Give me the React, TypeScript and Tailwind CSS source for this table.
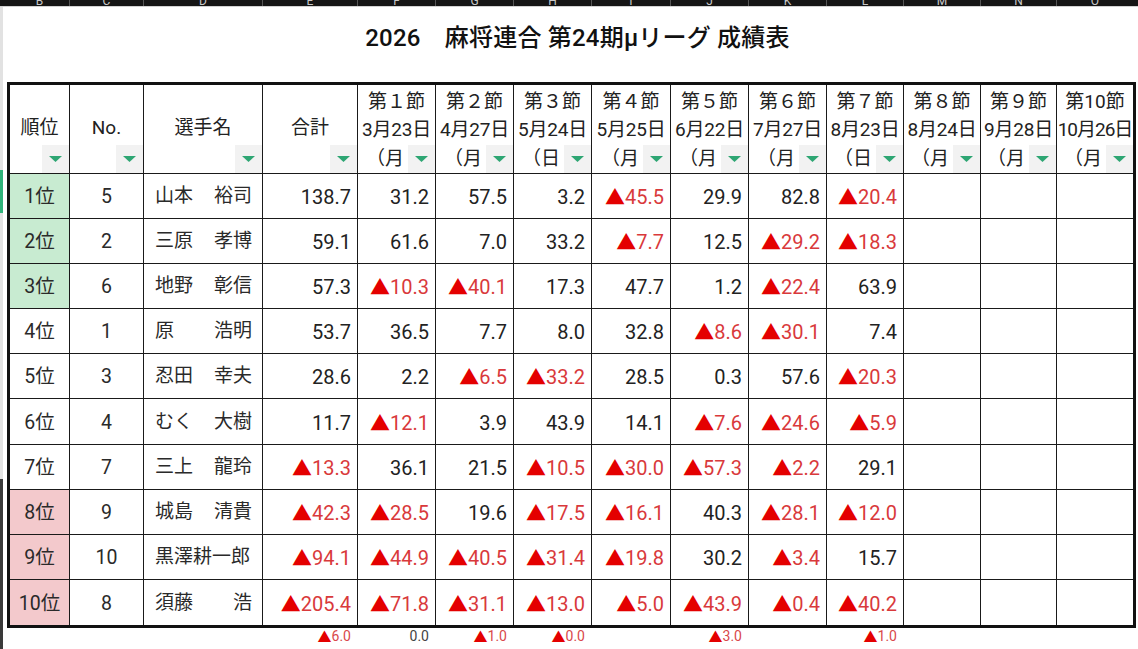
import React from "react";

const COLS =
  "grid grid-cols-[60px_74px_119px_95px_78px_78px_78px_79px_78px_78px_77px_77px_76px_76px]";

const LETTERS = ["B", "C", "D", "E", "F", "G", "H", "I", "J", "K", "L", "M", "N", "O"];

const MATCHES: [string, string, string][] = [
  ["第１節", "3月23日", "（月"],
  ["第２節", "4月27日", "（月"],
  ["第３節", "5月24日", "（日"],
  ["第４節", "5月25日", "（月"],
  ["第５節", "6月22日", "（月"],
  ["第６節", "7月27日", "（月"],
  ["第７節", "8月23日", "（日"],
  ["第８節", "8月24日", "（月"],
  ["第９節", "9月28日", "（月"],
  ["第10節", "10月26日", "（月"],
];

type Row = { rank: number; no: number; name: string[]; vals: string[] };

const ROWS: Row[] = [
  { rank: 1, no: 5, name: ["山本", "裕司"], vals: ["138.7", "31.2", "57.5", "3.2", "▲45.5", "29.9", "82.8", "▲20.4"] },
  { rank: 2, no: 2, name: ["三原", "孝博"], vals: ["59.1", "61.6", "7.0", "33.2", "▲7.7", "12.5", "▲29.2", "▲18.3"] },
  { rank: 3, no: 6, name: ["地野", "彰信"], vals: ["57.3", "▲10.3", "▲40.1", "17.3", "47.7", "1.2", "▲22.4", "63.9"] },
  { rank: 4, no: 1, name: ["原", "浩明"], vals: ["53.7", "36.5", "7.7", "8.0", "32.8", "▲8.6", "▲30.1", "7.4"] },
  { rank: 5, no: 3, name: ["忍田", "幸夫"], vals: ["28.6", "2.2", "▲6.5", "▲33.2", "28.5", "0.3", "57.6", "▲20.3"] },
  { rank: 6, no: 4, name: ["むく", "大樹"], vals: ["11.7", "▲12.1", "3.9", "43.9", "14.1", "▲7.6", "▲24.6", "▲5.9"] },
  { rank: 7, no: 7, name: ["三上", "龍玲"], vals: ["▲13.3", "36.1", "21.5", "▲10.5", "▲30.0", "▲57.3", "▲2.2", "29.1"] },
  { rank: 8, no: 9, name: ["城島", "清貴"], vals: ["▲42.3", "▲28.5", "19.6", "▲17.5", "▲16.1", "40.3", "▲28.1", "▲12.0"] },
  { rank: 9, no: 10, name: ["黒澤耕一郎"], vals: ["▲94.1", "▲44.9", "▲40.5", "▲31.4", "▲19.8", "30.2", "▲3.4", "15.7"] },
  { rank: 10, no: 8, name: ["須藤", "浩"], vals: ["▲205.4", "▲71.8", "▲31.1", "▲13.0", "▲5.0", "▲43.9", "▲0.4", "▲40.2"] },
];

const FOOT: (string | null)[] = [null, null, null, "▲6.0", "0.0", "▲1.0", "▲0.0", null, "▲3.0", null, "▲1.0", null, null, null];

function FilterBtn() {
  return (
    <span className="w-[27px] h-[28px] bg-[#f2f2f2] flex items-center justify-center shrink-0">
      <svg width="13" height="6" viewBox="0 0 13 6">
        <path d="M0 0H13L6.5 6Z" fill="#2ea673" />
      </svg>
    </span>
  );
}

function Num({ v }: { v: string }) {
  if (v.startsWith("▲")) {
    return (
      <span className="flex items-center">
        <span className="text-[#e40000] font-['Noto_Sans_CJK_JP',sans-serif] text-[20px] leading-none">▲</span>
        <span className="text-[#d9393b]">{v.slice(1)}</span>
      </span>
    );
  }
  return <span className="text-[#222]">{v}</span>;
}

function FootNum({ v }: { v: string }) {
  if (v.startsWith("▲")) {
    return (
      <span className="flex items-center">
        <span className="text-[#e40000] font-['Noto_Sans_CJK_JP',sans-serif] text-[14px] leading-none">▲</span>
        <span className="text-[#d9484a]">{v.slice(1)}</span>
      </span>
    );
  }
  return <span className="text-[#444]">{v}</span>;
}

export default function App() {
  const last = 13;
  return (
    <div className="w-[1138px] h-[649px] bg-white overflow-hidden flex flex-col font-[Roboto,'Noto_Sans_CJK_JP',sans-serif] text-[#222]">
      {/* top column-letter bar */}
      <div className="h-[6px] bg-[#151515] overflow-hidden flex shrink-0">
        <div className="w-[10px] shrink-0" />
        <div className={COLS}>
          {LETTERS.map((l, i) => (
            <div
              key={l}
              className={`h-[6px] overflow-hidden text-center text-[12px] leading-[12px] text-[#c8c8c8] ${i === last ? "" : "border-r border-[#555]"}`}
            >
              <div className="-mt-[5px]">{l}</div>
            </div>
          ))}
        </div>
      </div>
      <div className="h-px bg-[#d2d2d2] shrink-0" />

      <div className="flex flex-1 min-h-0">
        {/* left edge strip */}
        <div className="w-[3px] shrink-0 flex flex-col bg-[#e2e2e2]">
          <div className="h-[163px]" />
          <div className="h-[43px] bg-[#2fb37a]" />
          <div className="flex-1" />
          <div className="h-[170px] bg-[#3a3a3a]" />
        </div>

        <div className="flex-1 flex flex-col pl-[4px]">
          {/* title */}
          <div className="pt-[16px] mb-[29px] h-[30px] box-content flex justify-center pl-[10px]">
            <h1 className="text-[24px] leading-[30px] font-medium text-[#111] tracking-[0.2px]">
              2026　麻将連合 第24期μリーグ 成績表
            </h1>
          </div>

          {/* table */}
          <div className="w-[1129px] border-[3px] border-[#111]">
            <div className={COLS}>
              {/* header */}
              {["順位", "No.", "選手名", "合計"].map((h) => (
                <div
                  key={h}
                  className="relative h-[89px] border-r border-b border-[#1a1a1a] flex items-center justify-center text-[19px]"
                >
                  <span className="-mt-[2px]">{h}</span>
                  <div className="absolute right-0 bottom-0">
                    <FilterBtn />
                  </div>
                </div>
              ))}
              {MATCHES.map(([a, b, c], i) => (
                <div
                  key={a}
                  className={`h-[89px] border-b border-[#1a1a1a] flex flex-col ${i === 9 ? "" : "border-r"}`}
                >
                  <div className="h-[31px] leading-[31px] text-center text-[19px] pt-[1px]">{a}</div>
                  <div
                    className={`h-[27px] leading-[27px] text-center text-[19px] whitespace-nowrap ${i === 9 ? "tracking-[-1px]" : "tracking-[-0.2px]"}`}
                  >
                    {b}
                  </div>
                  <div className="flex-1 flex justify-end items-end">
                    <span className="leading-[28px] text-[19px] mr-[4px]">{c}</span>
                    <FilterBtn />
                  </div>
                </div>
              ))}

              {/* body */}
              {ROWS.map((r, ri) => {
                const lastRow = ri === ROWS.length - 1;
                const rowH = ri === 5 ? "h-[46px]" : "h-[45px]";
                const bb = lastRow ? "" : "border-b";
                const rankBg = r.rank <= 3 ? "bg-[#c8ebd1]" : r.rank >= 8 ? "bg-[#f3c9cc]" : "bg-white";
                return (
                  <React.Fragment key={r.rank}>
                    <div className={`${rowH} ${bb} ${rankBg} border-r border-[#1a1a1a] flex items-center justify-center pt-[2px] text-[19.5px] text-[#2a2a2a]`}>
                      {r.rank}位
                    </div>
                    <div className={`${rowH} ${bb} border-r border-[#1a1a1a] flex items-center justify-center pt-[2px] text-[19.5px] text-[#2a2a2a]`}>
                      {r.no}
                    </div>
                    <div className={`${rowH} ${bb} border-r border-[#1a1a1a] flex items-center justify-between pt-[1px] pl-[11px] pr-[10px] text-[19px] text-[#2a2a2a]`}>
                      {r.name.map((p) => (
                        <span key={p}>{p}</span>
                      ))}
                    </div>
                    {Array.from({ length: 11 }).map((_, ci) => {
                      const v = r.vals[ci];
                      return (
                        <div
                          key={ci}
                          className={`${rowH} ${bb} border-[#1a1a1a] ${ci === 10 ? "" : "border-r"} flex items-center justify-end pt-[2px] pr-[6px] text-[20px]`}
                        >
                          {v ? <Num v={v} /> : null}
                        </div>
                      );
                    })}
                  </React.Fragment>
                );
              })}
            </div>
          </div>

          {/* footer small sums */}
          <div className={`${COLS} pl-[3px]`}>
            {FOOT.map((f, i) => (
              <div key={i} className="h-[15px] flex justify-end items-center pr-[7px] text-[14px] leading-[14px]">
                {f ? <FootNum v={f} /> : null}
              </div>
            ))}
          </div>
        </div>
      </div>
    </div>
  );
}
